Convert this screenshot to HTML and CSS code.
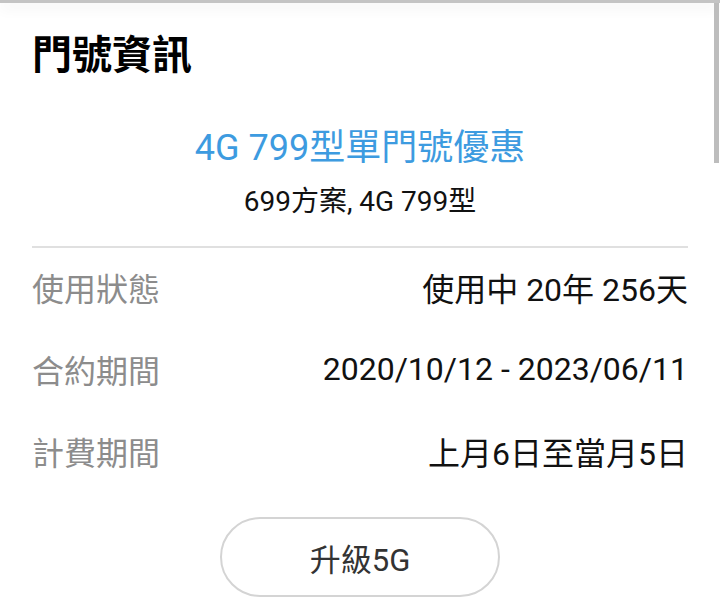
FILE: index.html
```html
<!DOCTYPE html>
<html lang="zh-Hant">
<head>
  <meta charset="UTF-8" />
  <meta name="viewport" content="width=device-width, initial-scale=1.0" />
  <title>門號資訊</title>
  <link rel="stylesheet" href="styles.css">
</head>
<body>
  <!-- Top edge of the sheet -->
  <div class="top-bar"></div>
  <div class="scroll-thumb"></div>

  <main class="sheet">
    <h1 class="sheet-title">門號資訊</h1>

    <!-- Plan summary -->
    <section class="plan">
      <div class="plan-name">4G 799型單門號優惠</div>
      <div class="plan-sub">699方案, 4G 799型</div>
    </section>

    <!-- Detail rows -->
    <ul class="details">
      <li class="detail-row">
        <span class="detail-label">使用狀態</span>
        <span class="detail-value">使用中 20年 256天</span>
      </li>
      <li class="detail-row">
        <span class="detail-label">合約期間</span>
        <span class="detail-value">2020/10/12 - 2023/06/11</span>
      </li>
      <li class="detail-row">
        <span class="detail-label">計費期間</span>
        <span class="detail-value">上月6日至當月5日</span>
      </li>
    </ul>

    <div class="actions">
      <button class="upgrade-btn">升級5G</button>
    </div>
  </main>
</body>
</html>
```

FILE: styles.css
```css
/* Reset and Base Styles */
* {
  box-sizing: border-box;
  margin: 0;
  padding: 0;
}
body {
  background: #fff;
  color: #111;
  font-family: Roboto, "Noto Sans CJK TC", sans-serif;
  overflow: hidden;
  height: 611px;
}

/* Top edge + shadow */
.top-bar {
  height: 3px;
  background: #c4c4c4;
  box-shadow: 0 4px 14px rgba(0, 0, 0, 0.12);
}
.scroll-thumb {
  position: absolute;
  top: 3px;
  right: 1px;
  width: 5px;
  height: 160px;
  background: #bdbdbd;
}

/* Sheet */
.sheet {
  padding: 29px 32px 0;
  display: flex;
  flex-direction: column;
}
.sheet-title {
  font-size: 40px;
  line-height: 48px;
  font-weight: 700;
  color: #000;
}

/* Plan summary */
.plan {
  text-align: center;
  padding-top: 46px;
  padding-bottom: 26px;
  border-bottom: 2px solid #e0e0e0;
}
.plan-name {
  font-size: 36px;
  line-height: 44px;
  color: #3d9be0;
}
.plan-sub {
  margin-top: 14px;
  font-size: 28px;
  line-height: 36px;
  color: #111;
}

/* Detail rows */
.details {
  list-style: none;
}
.detail-row {
  height: 82px;
  display: flex;
  align-items: center;
  justify-content: space-between;
}
.detail-row span {
  padding-bottom: 4px;
}
.detail-label {
  font-size: 32px;
  color: #8c8c8c;
}
.detail-value {
  font-size: 32px;
  color: #111;
}

/* Upgrade button */
.actions {
  display: flex;
  justify-content: center;
  padding-top: 23px;
}
.upgrade-btn {
  width: 280px;
  height: 80px;
  border: 2px solid #d4d4d4;
  border-radius: 40px;
  background: #fff;
  font-family: Roboto, "Noto Sans CJK TC", sans-serif;
  font-size: 31px;
  color: #333;
}
```
